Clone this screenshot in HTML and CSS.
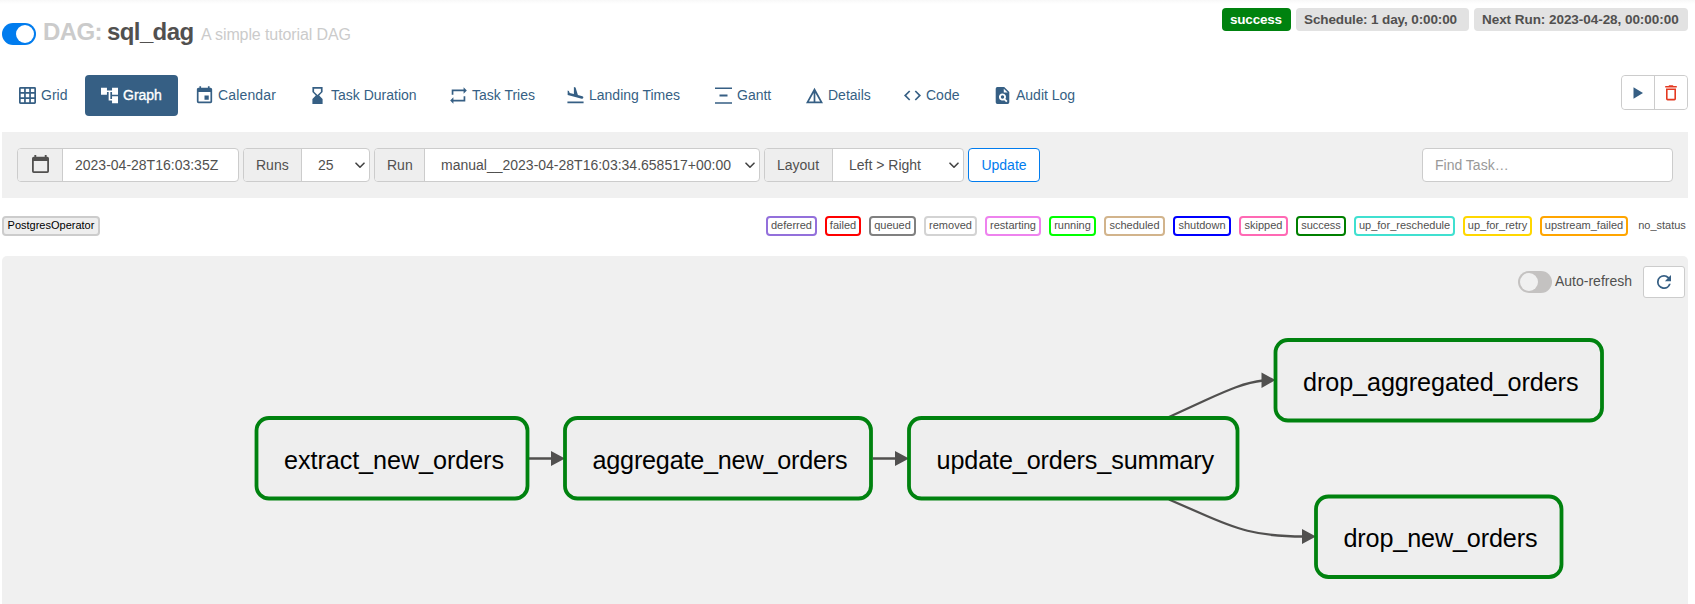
FILE: index.html
```html
<!DOCTYPE html>
<html lang="en">
<head>
<meta charset="utf-8">
<title>sql_dag - Graph - Airflow</title>
<link rel="stylesheet" href="styles.css">
</head>
<body>
<header class="header">
  <h1 class="title">
    <span class="switch on"></span>
    <span class="title-muted">DAG:</span>
    <span class="title-name">sql_dag</span>
    <small class="title-desc">A simple tutorial DAG</small>
  </h1>
  <div class="labels">
    <span class="label label-success">success</span>
    <span class="label label-schedule">Schedule: 1 day, 0:00:00</span>
    <span class="label label-next">Next Run: 2023-04-28, 00:00:00</span>
  </div>
</header>

<div class="navrow">
  <nav class="tabs">
    <a class="tab t-grid"><svg viewBox="0 0 24 24"><path fill-rule="evenodd" d="M2 0h20a2 2 0 0 1 2 2v20a2 2 0 0 1-2 2H2a2 2 0 0 1-2-2V2a2 2 0 0 1 2-2zM2.400 2.400v4.800h4.800V2.400zM9.600 2.400v4.800h4.800V2.400zM16.800 2.400v4.800h4.800V2.400zM2.400 9.600v4.800h4.800V9.600zM9.600 9.600v4.800h4.800V9.600zM16.800 9.600v4.800h4.800V9.600zM2.400 16.800v4.800h4.800v-4.800zM9.600 16.800v4.800h4.800v-4.800zM16.800 16.800v4.800h4.800v-4.800z"/></svg><span>Grid</span></a>
    <a class="tab active t-graph"><svg viewBox="2 2 20 20"><path d="M22 11V3h-7v3H9V3H2v8h7V8h2v10h4v3h7v-8h-7v3h-2V8h2v3z"/></svg><span>Graph</span></a>
    <a class="tab t-calendar"><svg viewBox="2 2 20 20"><path d="M17 12h-5v5h5v-5zM16 1v2H8V1H6v2H5c-1.110 0-1.990.9-1.990 2L3 19a2 2 0 0 0 2 2h14c1.100 0 2-.9 2-2V5c0-1.100-.9-2-2-2h-1V1h-2zm3 18H5V8h14v11z"/></svg><span>Calendar</span></a>
    <a class="tab t-duration"><svg viewBox="2 2 20 20"><path d="M6 2v6h.01L6 8.010 10 12l-4 4 .01.010H6V22h12v-5.990h-.01L18 16l-4-4 4-3.990-.01-.01H18V2H6zm10 5.500l-4 4-4-4V4h8v3.500z"/></svg><span>Task Duration</span></a>
    <a class="tab t-tries"><svg viewBox="2 2 20 20"><path d="M4 5h14V2.200L21.800 6 18 9.800V7H6v4H4zM20 19H6v2.800L2.200 18 6 14.200V17h12v-4h2z"/></svg><span>Task Tries</span></a>
    <a class="tab t-landing"><svg viewBox="2 2 20 20"><path d="M2.500 19h19v2h-19zm16.840-3.150c.8.210 1.620-.26 1.840-1.060.21-.8-.26-1.620-1.060-1.840l-5.310-1.420-2.760-9.020L10.120 2v8.280L5.150 8.950l-.93-2.320-1.450-.39v5.170z"/></svg><span>Landing Times</span></a>
    <a class="tab t-gantt"><svg viewBox="0 0 17 17"><path d="M0 .5h17v1.500H0zM4.500 7.600h8v2h-8zM0 15.300h17v1.500H0z"/></svg><span>Gantt</span></a>
    <a class="tab t-details"><svg viewBox="2 2 20 20"><path d="M12 3L2 21h20L12 3zm1 5.920L18.600 19H13V8.920zm-2 0V19H5.400L11 8.920z"/></svg><span>Details</span></a>
    <a class="tab t-code"><svg viewBox="2 2 20 20"><path d="M9.400 16.600L4.800 12l4.600-4.600L8 6l-6 6 6 6 1.400-1.400zm5.200 0l4.600-4.600-4.600-4.600L16 6l6 6-6 6-1.400-1.400z"/></svg><span>Code</span></a>
    <a class="tab t-audit"><svg viewBox="2 2 20 20"><path fill-rule="evenodd" d="M14 2H6a2 2 0 0 0-2 2v16a2 2 0 0 0 2 2h12a2 2 0 0 0 2-2V8zM13.500 4.200V8.500h4.600zM12 9.600a4.200 4.200 0 1 0 2 7.900l2.400 2.400 1.500-1.500-2.400-2.400A4.200 4.200 0 0 0 12 9.600zM12 11.800a2 2 0 1 1 0 4 2 2 0 0 1 0-4z"/></svg><span>Audit Log</span></a>
  </nav>
  <div class="actions">
    <button class="action"><svg viewBox="0 0 10 12"><path fill="#365f84" d="M.5 .2L10 6 .5 11.800z"/></svg></button>
    <button class="action"><svg class="trash" viewBox="0 0 12 16"><path fill="#e43921" fill-rule="evenodd" d="M.2 1.100h3.300L4.200.3h3.600l.7.8h3.300v1.500H.2zM1 3.500h10v10.300a1.600 1.600 0 0 1-1.600 1.600H2.600A1.600 1.600 0 0 1 1 13.800zM2.600 5v8.800h6.800V5z"/></svg></button>
  </div>
</div>

<form class="filters">
  <div class="group g-date">
    <span class="addon"><svg class="cal" viewBox="0 0 18 20"><path fill-rule="evenodd" d="M2.500 0h2v1.800h9V0h2v1.800h.7A1.800 1.800 0 0 1 18 3.600v13.600a1.800 1.800 0 0 1-1.800 1.800H1.800A1.800 1.800 0 0 1 0 17.200V3.600a1.800 1.800 0 0 1 1.800-1.800h.7zM1.900 6.300v10.800h14.200V6.300z"/></svg></span>
    <span class="field">2023-04-28T16:03:35Z</span>
  </div>
  <div class="group g-runs">
    <span class="addon">Runs</span>
    <span class="field select">25<svg class="chev" viewBox="0 0 10 7"><path d="M1 1.200l4 4 4-4"/></svg></span>
  </div>
  <div class="group g-run">
    <span class="addon">Run</span>
    <span class="field select">manual__2023-04-28T16:03:34.658517+00:00<svg class="chev" viewBox="0 0 10 7"><path d="M1 1.200l4 4 4-4"/></svg></span>
  </div>
  <div class="group g-layout">
    <span class="addon">Layout</span>
    <span class="field select">Left &gt; Right<svg class="chev" viewBox="0 0 10 7"><path d="M1 1.200l4 4 4-4"/></svg></span>
  </div>
  <button type="button" class="update">Update</button>
  <span class="search">Find Task…</span>
</form>

<div class="legend">
  <span class="chip operator">PostgresOperator</span>
  <div class="states">
    <span class="chip deferred">deferred</span>
    <span class="chip failed">failed</span>
    <span class="chip queued">queued</span>
    <span class="chip removed">removed</span>
    <span class="chip restarting">restarting</span>
    <span class="chip running">running</span>
    <span class="chip scheduled">scheduled</span>
    <span class="chip shutdown">shutdown</span>
    <span class="chip skipped">skipped</span>
    <span class="chip success">success</span>
    <span class="chip reschedule">up_for_reschedule</span>
    <span class="chip retry">up_for_retry</span>
    <span class="chip upstream">upstream_failed</span>
    <span class="chip none">no_status</span>
  </div>
</div>

<main class="canvas">
  <svg class="graph" viewBox="2 256 1686 348">
    <g class="edges">
      <path d="M529 458.500H553M873 458.500H897M1169 417L1206 400C1228 390 1245 382.500 1263 380.500M1169 499.500L1200 513C1236 529 1256 536.500 1304 536.500"/>
    </g>
    <g class="arrows">
      <path d="M551 451l14 7.500-14 7.500zM895 451l14 7.500-14 7.500zM1261.500 372.500l14 7.500-14 8zM1302 529l14 7.500-14 7.500z"/>
    </g>
    <g class="nodes">
      <rect x="256.500" y="418" width="271" height="80.500" rx="12.500"/>
      <rect x="565" y="418" width="306" height="80.500" rx="12.500"/>
      <rect x="909" y="418" width="328.500" height="80.500" rx="12.500"/>
      <rect x="1275.500" y="340" width="326.500" height="80.500" rx="12.500"/>
      <rect x="1316" y="496.500" width="245.500" height="80.500" rx="12.500"/>
    </g>
    <g class="names">
      <text x="284" y="469" textLength="220">extract_new_orders</text>
      <text x="592.500" y="469" textLength="255">aggregate_new_orders</text>
      <text x="936.500" y="469" textLength="277.500">update_orders_summary</text>
      <text x="1303" y="391" textLength="275.500">drop_aggregated_orders</text>
      <text x="1343.500" y="547" textLength="194">drop_new_orders</text>
    </g>
  </svg>
  <div class="refresh">
    <span class="switch off"></span>
    <span class="refresh-text">Auto-refresh</span>
    <button class="reload"><svg viewBox="4 4 16 16"><path d="M17.650 6.350A7.958 7.958 0 0 0 12 4a8 8 0 1 0 7.730 10h-2.080A6 6 0 1 1 12 6c1.660 0 3.140.69 4.220 1.780L13 11h7V4z"/></svg></button>
  </div>
</main>
</body>
</html>
```
FILE: styles.css
```css
* { box-sizing: border-box; }
body {
  margin: 0;
  padding: 0 7px 0 2px;
  width: 1695px;
  height: 604px;
  overflow: hidden;
  background: linear-gradient(#f8f8f8, #fff 4px) #fff;
  color: #51504f;
  font: 14px/20px "Liberation Sans", Arial, sans-serif;
}
button { font: inherit; padding: 0; margin: 0; background: #fff; }
svg { display: block; flex: none; }

.header { display: flex; justify-content: space-between; height: 75px; }
.title { display: flex; margin: 0; padding-top: 19px; font-size: 24px; line-height: 26px; letter-spacing: -.6px; white-space: nowrap; }
.title-muted { color: #cbcbcb; width: 64px; margin-left: 7px; }
.title-name { width: 94px; }
.title-desc { color: #cbcbcb; font-size: 16px; font-weight: 400; line-height: 32px; letter-spacing: -.1px; }
.switch { flex: none; width: 34px; height: 22px; border-radius: 11px; padding: 2px; }
.switch::before { content: ""; display: block; width: 18px; height: 18px; border-radius: 50%; background: #fff; }
.switch.on { background: #017cee; margin-top: 4px; padding-left: 14px; }
.switch.off { background: #c4c2c1; }
.switch.off::before { background: #f0f0f0; }

.labels { display: flex; gap: 5px; padding-top: 8px; }
.label { height: 23px; border-radius: 4px; padding-left: 8px; background: #e2e2e2; font-size: 13.500px; font-weight: 700; line-height: 23px; letter-spacing: -.05px; white-space: nowrap; }
.label-success { width: 69px; background: #00820f; color: #fff; letter-spacing: -.2px; }
.label-schedule { width: 173px; letter-spacing: -.12px; }
.label-next { width: 214px; }

.navrow { display: flex; justify-content: space-between; height: 57px; }
.tabs { display: flex; gap: 2px; }
.tab { display: flex; align-items: center; gap: 5px; height: 41px; padding: 0 0 2px 16px; border-radius: 4px; color: #365f84; white-space: nowrap; }
.tab svg { width: 17px; height: 17px; margin-top: 1px; fill: currentColor; overflow: visible; }
.t-grid { width: 81px; }
.t-grid svg { margin-left: 1px; }
.t-graph { width: 93px; }
.t-calendar { width: 111px; }
.t-calendar span { letter-spacing: .15px; }
.t-duration { width: 139px; }
.t-tries { width: 115px; }
.t-landing { width: 146px; }
.t-gantt { width: 89px; }
.t-details { width: 96px; }
.t-code { width: 88px; }
.t-audit { width: 104px; }
.tab.active { background: #365f84; color: #fff; -webkit-text-stroke: .35px #fff; }
.actions { display: flex; width: 67px; height: 35px; border: 1px solid #ccc; border-radius: 4px; background: #fff; }
.action { display: flex; flex: 1; align-items: center; justify-content: center; border: 0; border-radius: 4px; }
.action + .action { border-left: 1px solid #ccc; border-radius: 0 4px 4px 0; }
.action svg { width: 10px; height: 12px; }
.action svg.trash { width: 12px; height: 16px; }

.filters { display: flex; gap: 4px; height: 66px; padding: 16px 15px; background: #f0f0f0; }
.group { display: flex; height: 34px; border: 1px solid #ccc; border-radius: 4px; overflow: hidden; background: #fff; line-height: 32px; white-space: nowrap; }
.addon { flex: none; padding-left: 12px; border-right: 1px solid #ccc; background: #eee; }
.cal { width: 17px; height: 19px; margin: 6px 0 0 2px; fill: #51504f; }
.field { display: flex; flex: 1; padding-left: 12px; }
.select { justify-content: space-between; padding: 0 4px 0 16px; }
.chev { width: 10px; height: 7px; margin-top: 13px; fill: none; stroke: #444; stroke-width: 1.600; stroke-linecap: round; stroke-linejoin: round; }
.g-date { width: 222px; }
.g-date .addon { width: 45px; }
.g-runs { width: 127px; }
.g-runs .addon { width: 58px; }
.g-run { width: 386px; }
.g-run .addon { width: 50px; }
.g-layout { width: 200px; }
.g-layout .addon { width: 68px; }
.update { width: 72px; height: 34px; border: 1px solid #017cee; border-radius: 4px; color: #017cee; }
.search { width: 251px; height: 34px; margin-left: auto; padding-left: 12px; border: 1px solid #ccc; border-radius: 4px; background: #fff; color: #999; line-height: 32px; }

.legend { display: flex; justify-content: space-between; height: 58px; padding-top: 18px; }
.states { display: flex; gap: 8px; }
.chip { height: 20px; border: 2px solid; border-radius: 4px; font-size: 11px; line-height: 15px; text-align: center; white-space: nowrap; }
.chip.operator { width: 98px; border-color: #ccc; background: #eee; }
.operator { color: #000; }
.deferred { width: 51px; border-color: mediumpurple; }
.failed { width: 36px; border-color: red; }
.queued { width: 47px; border-color: gray; }
.removed { width: 53px; border-color: lightgrey; }
.restarting { width: 56px; border-color: violet; }
.running { width: 47px; border-color: lime; }
.scheduled { width: 61px; border-color: tan; }
.shutdown { width: 58px; border-color: blue; }
.skipped { width: 49px; border-color: hotpink; }
.success { width: 50px; border-color: green; }
.reschedule { width: 101px; border-color: turquoise; }
.retry { width: 69px; border-color: gold; }
.upstream { width: 88px; border-color: orange; }
.none { width: 52px; border-color: transparent; }

.canvas { position: relative; height: 348px; border-radius: 5px 5px 0 0; background: #f0f0f0; }
.graph { width: 1686px; height: 348px; }
.edges path { fill: none; stroke: #51504f; stroke-width: 2.300; }
.arrows path { fill: #51504f; }
.nodes rect { fill: #eee; stroke: #00820f; stroke-width: 3.800; }
.names text { fill: #000; font-size: 25.200px; }
.refresh { position: absolute; top: 10px; right: 3px; display: flex; align-items: center; }
.refresh-text { width: 88px; margin: -2px 0 0 3px; white-space: nowrap; }
.reload { display: flex; align-items: center; justify-content: center; width: 42px; height: 32px; border: 1px solid #ccc; border-radius: 3px; }
.reload svg { width: 14px; height: 14px; fill: #365f84; }
```
